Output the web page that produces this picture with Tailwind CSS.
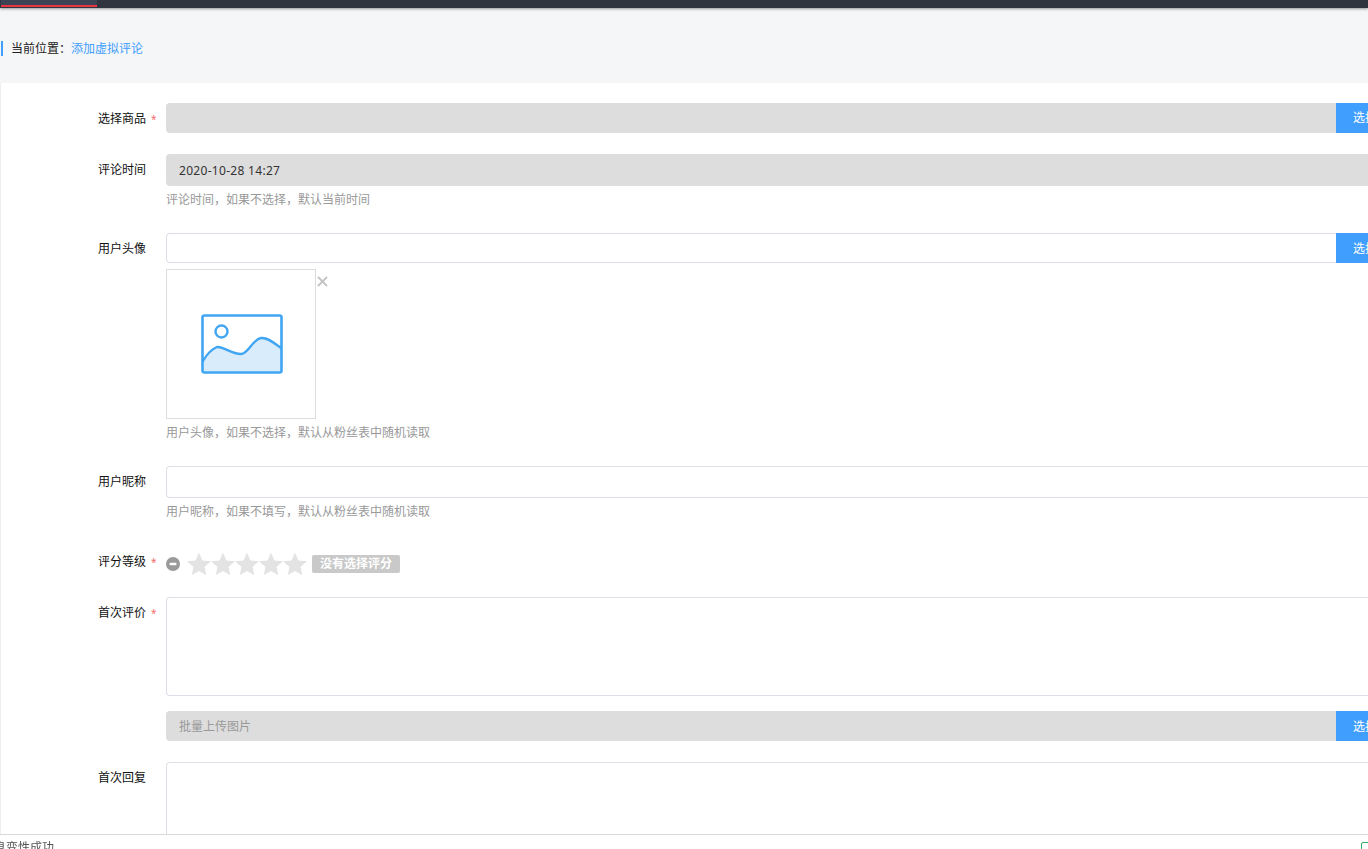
<!DOCTYPE html>
<html lang="zh-CN">
<head>
  <meta charset="UTF-8" />
  <title>添加虚拟评论</title>
  <script src="https://cdn.jsdelivr.net/npm/@tailwindcss/browser@4"></script>
</head>
<body class="h-[849px] w-[1368px] overflow-hidden bg-white text-[12px] text-[#111] font-['Noto_Sans','Noto_Sans_CJK_SC',sans-serif]">

  <!-- Top bar -->
  <div class="h-[8px] bg-[#30343f] pl-px shadow-[0_1px_3px_rgba(0,0,0,0.4)] relative z-10">
    <div class="h-[7px] w-[96px] bg-[#3c4354] border-b-2 border-[#e8343f]"></div>
  </div>

  <!-- Breadcrumb -->
  <div class="h-[75px] bg-[#f5f6f8] pt-[33px] pl-px">
    <div class="flex h-[15px] items-center border-l-2 border-[#409eff] pl-[8px] leading-[15px]">
      <span class="text-[#222]">当前位置：</span><span class="text-[#409eff]">添加虚拟评论</span>
    </div>
  </div>

  <!-- Form -->
  <div class="relative h-[751px] w-[1500px] border-l border-[#eeeeee] pt-[20px] pb-0">

    <div class="flex h-[30px]">
      <label class="w-[97px] shrink-0 leading-[32px] ml-[68px] flex justify-end"><span>选择商品</span><span class="w-[20px] pl-[5px] text-[10px] text-[#f56c6c]">*</span></label>
      <div class="flex flex-1">
        <div class="flex-1 rounded-l-[4px] bg-[#dddddd]"></div>
        <button class="w-[164px] bg-[#409eff] pl-[17px] text-left text-white">选择商品</button>
      </div>
    </div>

    <div class="flex mt-[21px] h-[32px]">
      <label class="w-[97px] shrink-0 leading-[32px] ml-[68px] flex justify-end"><span>评论时间</span><span class="w-[20px]"></span></label>
      <div class="flex-1 rounded-l-[4px] bg-[#dddddd] pl-[13px] leading-[33px] tracking-[0.3px] text-[#333]">2020-10-28 14:27</div>
    </div>
    <p class="ml-[165px] mt-[6px] leading-[16px] text-[#999]">评论时间，如果不选择，默认当前时间</p>

    <div class="flex mt-[25px] h-[30px]">
      <label class="w-[97px] shrink-0 leading-[32px] ml-[68px] flex justify-end"><span>用户头像</span><span class="w-[20px]"></span></label>
      <div class="flex flex-1">
        <div class="flex-1 rounded-l-[4px] border border-r-0 border-[#dcdfe6] bg-white"></div>
        <button class="w-[164px] bg-[#409eff] pl-[17px] pt-[1px] text-left text-white">选择图片</button>
      </div>
    </div>
    <div class="relative ml-[165px] mt-[6px] flex h-[150px] w-[150px] items-center justify-center border border-[#dddddd]">
      <svg class="ml-[2px]" width="82" height="60" viewBox="0 0 82 60" fill="none">
        <path d="M2 47 C6 40 11 35 16 33 C22 32 30 40 40 40 C47 40 51 26 60 24 C67 23 74 30 80 34 V58 H2 Z" fill="#d9ecfc"/>
        <rect x="1.5" y="1.5" width="79" height="57" rx="2" stroke="#40a5f2" stroke-width="2.6"/>
        <circle cx="20.5" cy="17.5" r="6" stroke="#40a5f2" stroke-width="2.4"/>
        <path d="M2 47 C6 40 11 35 16 33 C22 32 30 40 40 40 C47 40 51 26 60 24 C67 23 74 30 80 34" stroke="#40a5f2" stroke-width="2.4" stroke-linecap="round"/>
      </svg>
      <svg class="absolute left-[150px] top-[6px]" width="11" height="11" viewBox="0 0 11 11" fill="none">
        <path d="M1 1 L10 10 M10 1 L1 10" stroke="#c4c4c4" stroke-width="1.9"/>
      </svg>
    </div>
    <p class="ml-[165px] mt-[6px] leading-[16px] text-[#999]">用户头像，如果不选择，默认从粉丝表中随机读取</p>

    <div class="flex mt-[25px] h-[32px]">
      <label class="w-[97px] shrink-0 leading-[32px] ml-[68px] flex justify-end"><span>用户昵称</span><span class="w-[20px]"></span></label>
      <div class="flex-1 rounded-l-[4px] border border-r-0 border-[#dcdfe6] bg-white"></div>
    </div>
    <p class="ml-[165px] mt-[6px] leading-[16px] text-[#999]">用户昵称，如果不填写，默认从粉丝表中随机读取</p>

    <div class="flex mt-[25px] h-[30px]">
      <label class="w-[97px] shrink-0 leading-[34px] ml-[68px] flex justify-end"><span>评分等级</span><span class="w-[20px] pl-[5px] text-[10px] text-[#f56c6c]">*</span></label>
      <div class="flex items-center pt-[7px]">
        <svg width="14" height="14" viewBox="0 0 14 14">
          <circle cx="7" cy="7" r="7" fill="#9a9a9a"/>
          <rect x="3.5" y="5.7" width="7" height="2.6" rx="1" fill="#fff"/>
        </svg>
        <div class="ml-[7px] flex">
          <svg width="24" height="24" viewBox="0 0 24 24"><path d="M12 0.5 L15.4 8.4 L24 9.2 L17.5 14.9 L19.4 23.3 L12 18.9 L4.6 23.3 L6.5 14.9 L0 9.2 L8.6 8.4 Z" fill="#e3e3e3"/></svg>
          <svg width="24" height="24" viewBox="0 0 24 24"><path d="M12 0.5 L15.4 8.4 L24 9.2 L17.5 14.9 L19.4 23.3 L12 18.9 L4.6 23.3 L6.5 14.9 L0 9.2 L8.6 8.4 Z" fill="#e3e3e3"/></svg>
          <svg width="24" height="24" viewBox="0 0 24 24"><path d="M12 0.5 L15.4 8.4 L24 9.2 L17.5 14.9 L19.4 23.3 L12 18.9 L4.6 23.3 L6.5 14.9 L0 9.2 L8.6 8.4 Z" fill="#e3e3e3"/></svg>
          <svg width="24" height="24" viewBox="0 0 24 24"><path d="M12 0.5 L15.4 8.4 L24 9.2 L17.5 14.9 L19.4 23.3 L12 18.9 L4.6 23.3 L6.5 14.9 L0 9.2 L8.6 8.4 Z" fill="#e3e3e3"/></svg>
          <svg width="24" height="24" viewBox="0 0 24 24"><path d="M12 0.5 L15.4 8.4 L24 9.2 L17.5 14.9 L19.4 23.3 L12 18.9 L4.6 23.3 L6.5 14.9 L0 9.2 L8.6 8.4 Z" fill="#e3e3e3"/></svg>
        </div>
        <span class="ml-[5px] h-[18px] w-[88px] rounded-[2px] bg-[#c9c9c9] text-center font-bold leading-[18px] text-white">没有选择评分</span>
      </div>
    </div>

    <div class="flex mt-[22px] h-[99px]">
      <label class="w-[97px] shrink-0 leading-[32px] ml-[68px] flex justify-end"><span>首次评价</span><span class="w-[20px] pl-[5px] text-[10px] text-[#f56c6c]">*</span></label>
      <div class="flex-1 rounded-l-[4px] border border-r-0 border-[#dcdfe6] bg-white"></div>
    </div>

    <div class="flex mt-[15px] h-[30px] ml-[165px]">
      <div class="flex-1 rounded-l-[4px] bg-[#dddddd] pl-[13px] leading-[31px] text-[#999]">批量上传图片</div>
      <button class="w-[164px] bg-[#409eff] pl-[17px] pt-[1px] text-left text-white">选择图片</button>
    </div>

    <div class="flex mt-[21px] h-[99px]">
      <label class="w-[97px] shrink-0 leading-[32px] ml-[68px] flex justify-end"><span>首次回复</span><span class="w-[20px]"></span></label>
      <div class="flex-1 rounded-l-[4px] border border-r-0 border-[#dcdfe6] bg-white"></div>
    </div>

  </div>

  <!-- Status bar -->
  <div class="fixed bottom-0 left-0 flex h-[15px] w-[1368px] items-start justify-between border-t border-[#d8d8d8] bg-white">
    <span class="ml-[-6px] pt-[5px] leading-[16px] text-[#555]">息变性成功</span>
    <span class="mr-[-6px] mt-[7px] h-[14px] w-[13px] rounded-[2px] border border-[#2dad6b]"></span>
  </div>
</body>
</html>
